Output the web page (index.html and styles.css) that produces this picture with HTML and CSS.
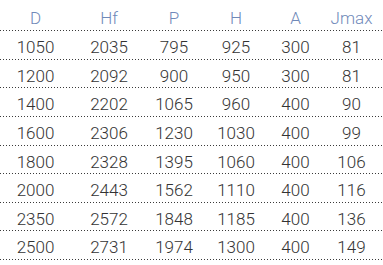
FILE: index.html
```html
<!DOCTYPE html>
<html>
<head>
<meta charset="utf-8">
<link rel="stylesheet" href="styles.css">
</head>
<body>
<div class="table">
  <div class="row head"><span>D</span><span>Hf</span><span>P</span><span>H</span><span>A</span><span>Jmax</span></div>
  <div class="row"><span>1050</span><span>2035</span><span>795</span><span>925</span><span>300</span><span>81</span></div>
  <div class="row"><span>1200</span><span>2092</span><span>900</span><span>950</span><span>300</span><span>81</span></div>
  <div class="row"><span>1400</span><span>2202</span><span>1065</span><span>960</span><span>400</span><span>90</span></div>
  <div class="row"><span>1600</span><span>2306</span><span>1230</span><span>1030</span><span>400</span><span>99</span></div>
  <div class="row"><span>1800</span><span>2328</span><span>1395</span><span>1060</span><span>400</span><span>106</span></div>
  <div class="row"><span>2000</span><span>2443</span><span>1562</span><span>1110</span><span>400</span><span>116</span></div>
  <div class="row"><span>2350</span><span>2572</span><span>1848</span><span>1185</span><span>400</span><span>136</span></div>
  <div class="row"><span>2500</span><span>2731</span><span>1974</span><span>1300</span><span>400</span><span>149</span></div>
</div>
</body>
</html>
```
FILE: styles.css
```css
html, body {
  margin: 0;
  padding: 0;
  background: #fff;
}
.table {
  width: 383px;
  font-family: Roboto, "Liberation Sans", sans-serif;
  font-weight: 300;
  font-size: 17px;
  color: #333;
}
.row {
  display: grid;
  grid-template-columns: 71px 76px 54px 70px 49px 63px;
  box-sizing: border-box;
  height: 28.625px;
  padding-top: 8px;
  line-height: 17px;
  background-image: linear-gradient(to right, #3a3a3a 1px, transparent 1px);
  background-size: 3px 1px;
  background-repeat: repeat-x;
  background-position: 0 100%;
}
.row span {
  text-align: center;
}
.head {
  height: 31px;
  padding-top: 10px;
  color: #7089b9;
}
```
